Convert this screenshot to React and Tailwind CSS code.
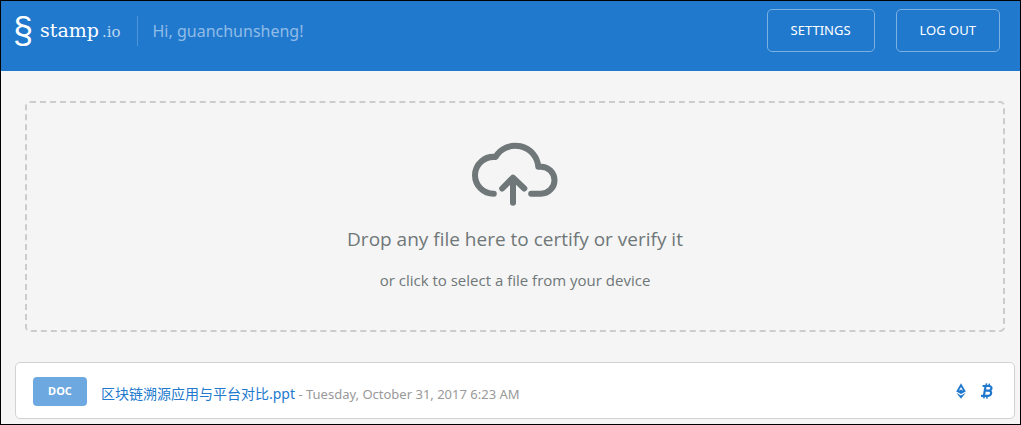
import React from "react";

function HeaderButton({ children }) {
  return (
    <button
      type="button"
      className="h-[43px] rounded-[5px] border border-[#7ab0e3] px-[23px] text-[13px] text-white"
    >
      {children}
    </button>
  );
}

function CloudUploadIcon() {
  return (
    <svg
      width="88"
      height="66"
      viewBox="0 0 88 66"
      fill="none"
      stroke="#6f7778"
      strokeWidth="6"
      strokeLinecap="round"
      strokeLinejoin="round"
      aria-hidden="true"
    >
      <path d="M22.8 52.7A18.6 18.6 0 0 1 4 34.2A18.6 18.6 0 0 1 24.6 16A23 23 0 0 1 67.3 25.7H70A13.5 13.5 0 0 1 70 52.7H60.2" />
      <path d="M42 61.7V37M31.2 47.5L42 36.6L53.3 47.5" />
    </svg>
  );
}

function EthereumIcon() {
  return (
    <svg width="10" height="16" viewBox="0 0 10 16" fill="#2179ce" role="img" aria-label="Ethereum">
      <path
        fillRule="evenodd"
        d="M5 0.3L9.8 8.4L5 11L0.2 8.4ZM5 4L2.8 7.7L5 6.5L7.2 7.7Z"
      />
      <path d="M0.3 9.8L5 12.4L9.7 9.8L5 15.8Z" />
    </svg>
  );
}

function BitcoinIcon() {
  return (
    <svg width="14" height="16" viewBox="0 0 14 16" fill="none" stroke="#2179ce" role="img" aria-label="Bitcoin">
      <path
        strokeWidth="2.2"
        strokeLinejoin="round"
        d="M2.6 3H8.8C12.6 3.2 12.2 7.4 8.4 7.6H5.4M8.4 7.6C12.6 8 11.8 12.8 7.4 12.9H1M5.6 3L3.9 12.8"
      />
      <path strokeWidth="1.6" d="M6.5 0.4L6.1 3M9.4 0.6L9 3.2M4.2 12.8L3.8 15.4M7.2 12.8L6.8 15.6" />
    </svg>
  );
}

export default function App() {
  return (
    <div className="flex min-h-screen flex-col border border-black bg-[#f5f5f5] font-['Noto_Sans','Noto_Sans_CJK_SC',sans-serif]">
      <header className="flex h-[70px] items-start justify-between bg-[#2179ce] pt-2 pr-5 pl-3">
        <div className="flex h-[43px] items-center">
          <a href="#" className="flex items-center text-white">
            <span className="w-[27px] font-['Liberation_Sans',sans-serif] text-4xl leading-10">
              §
            </span>
            <span className="font-['DejaVu_Serif',serif] text-[19px] leading-10">
              stamp<span className="ml-[3px] text-[15px] text-[#bcd7f0]">.io</span>
            </span>
          </a>
          <span className="ml-4 flex h-[30px] items-center border-l border-[#4d94d8] pl-[15px] text-base text-[#90bce6]">
            Hi, guanchunsheng!
          </span>
        </div>
        <nav className="flex gap-[21px]">
          <HeaderButton>SETTINGS</HeaderButton>
          <HeaderButton>LOG OUT</HeaderButton>
        </nav>
      </header>

      <main className="pt-[30px] pr-[5px] pb-[5px] pl-[14px]">
        <button
          type="button"
          className="mx-[10px] flex h-[231px] w-[calc(100%-20px)] flex-col items-center rounded-[5px] border-2 border-dashed border-[#cccccc] pt-[38px] font-['Open_Sans',sans-serif] text-[#6f7778]"
        >
          <CloudUploadIcon />
          <span className="mt-[18px] text-[19px] leading-7">Drop any file here to certify or verify it</span>
          <span className="mt-[15px] text-[15px] leading-6">or click to select a file from your device</span>
        </button>

        <article className="mt-[30px] flex h-[57px] items-center rounded-[5px] border border-[#d2d2d2] bg-white pt-px pr-5 pl-[17px]">
          <span className="flex h-[29px] w-[54px] items-center justify-center rounded-[4px] bg-[#6da9e0] text-[11px] font-bold text-white">
            DOC
          </span>
          <p className="ml-[14px] flex-1 pt-[5px] text-[13px] leading-6 text-[#999999]">
            <a href="#" className="text-sm text-[#2179ce]">
              区块链溯源应用与平台对比.ppt
            </a>{" "}
            - Tuesday, October 31, 2017 6:23 AM
          </p>
          <div className="flex items-center gap-[14px]">
            <EthereumIcon />
            <BitcoinIcon />
          </div>
        </article>
      </main>
    </div>
  );
}
